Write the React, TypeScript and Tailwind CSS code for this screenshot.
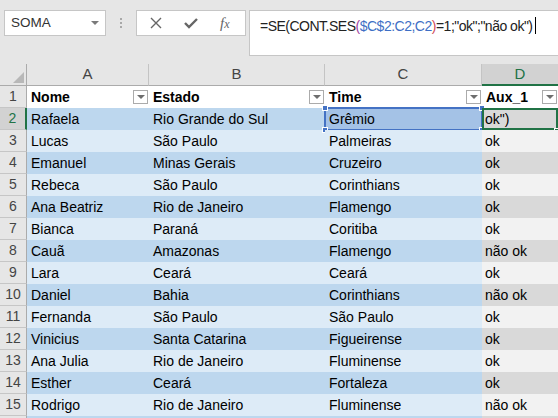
const rows = [
  ['Rafaela', 'Rio Grande do Sul', 'Grêmio', 'ok")'],
  ['Lucas', 'São Paulo', 'Palmeiras', 'ok'],
  ['Emanuel', 'Minas Gerais', 'Cruzeiro', 'ok'],
  ['Rebeca', 'São Paulo', 'Corinthians', 'ok'],
  ['Ana Beatriz', 'Rio de Janeiro', 'Flamengo', 'ok'],
  ['Bianca', 'Paraná', 'Coritiba', 'ok'],
  ['Cauã', 'Amazonas', 'Flamengo', 'não ok'],
  ['Lara', 'Ceará', 'Ceará', 'ok'],
  ['Daniel', 'Bahia', 'Corinthians', 'não ok'],
  ['Fernanda', 'São Paulo', 'São Paulo', 'ok'],
  ['Vinicius', 'Santa Catarina', 'Figueirense', 'ok'],
  ['Ana Julia', 'Rio de Janeiro', 'Fluminense', 'ok'],
  ['Esther', 'Ceará', 'Fortaleza', 'ok'],
  ['Rodrigo', 'Rio de Janeiro', 'Fluminense', 'não ok'],
  ['', '', '', ''],
];

const font = { fontFamily: '"Liberation Sans", Arial, sans-serif' };

function FilterButton() {
  return (
    <span className="ml-auto mr-[1px] flex h-[14px] w-[15px] items-center justify-center border border-[#ababab] bg-white">
      <span className="h-0 w-0 border-x-[4px] border-t-[4px] border-x-transparent border-t-[#6e6e6e]" />
    </span>
  );
}

function Corner({ pos }: { pos: string }) {
  return <span className={`absolute h-[6px] w-[6px] border border-white bg-[#4472c4] ${pos}`} />;
}

function FormulaBar() {
  return (
    <div className="flex h-[64px] items-start bg-[#e6e6e6] pt-[10px]">
      <div className="ml-[4px] flex h-[26px] w-[102px] items-center border border-[#c6c6c6] bg-white pl-[6px] pr-[6px] text-[13.5px] text-[#333]">
        <span>SOMA</span>
        <span className="ml-auto h-0 w-0 border-x-[4px] border-t-[4px] border-x-transparent border-t-[#7a7a7a]" />
      </div>
      <div className="flex h-[26px] w-[30px] flex-col items-center justify-center gap-[2px]">
        <span className="h-[2px] w-[2px] bg-[#a8a8a8]" />
        <span className="h-[2px] w-[2px] bg-[#a8a8a8]" />
        <span className="h-[2px] w-[2px] bg-[#a8a8a8]" />
      </div>
      <div className="flex h-[26px] w-[110px] items-center border border-[#c6c6c6] bg-white">
        <svg width="12" height="12" viewBox="0 0 12 12" className="ml-[13px]">
          <path d="M1 1 L11 11 M11 1 L1 11" stroke="#666" strokeWidth="1.4" />
        </svg>
        <svg width="14" height="12" viewBox="0 0 14 12" className="ml-[22px]">
          <path d="M1 6 L5 10 L13 2" stroke="#666" strokeWidth="2.4" fill="none" />
        </svg>
        <span
          className="ml-[22px] text-[15px] italic text-[#666]"
          style={{ fontFamily: '"Liberation Serif", "Times New Roman", serif' }}
        >
          f<span className="text-[12px]">x</span>
        </span>
      </div>
      <div className="ml-[3px] h-[46px] flex-1 border-y border-l border-[#c6c6c6] bg-white pl-[10px] pt-[3px] text-[14px] tracking-[-0.5px] text-[#222]">
        =SE(CONT.SES<span className="text-[#a03fa0]">(</span>
        <span className="text-[#3e6fc5]">$C$2:C2;C2</span>
        <span className="text-[#d24a5a]">)</span>=1;"ok";"não ok")
        <span className="ml-[2px] inline-block h-[17px] w-[1px] translate-y-[3px] bg-black" />
      </div>
    </div>
  );
}

export default function App() {
  return (
    <div className="h-[418px] w-[558px] overflow-hidden bg-white" style={font}>
      <FormulaBar />
      <div className="grid grid-cols-[27px_122px_176px_157px_76px]">
        {/* column headers */}
        <div className="relative h-[22px] border-r border-b border-[#ababab] bg-[#e6e6e6]">
          <span className="absolute right-[2px] bottom-[2px] h-0 w-0 border-b-[11px] border-l-[11px] border-b-[#b8b8b8] border-l-transparent" />
        </div>
        {['A', 'B', 'C'].map((c) => (
          <div
            key={c}
            className="flex h-[22px] items-center justify-center border-r border-b border-[#c4c4c4] border-b-[#ababab] bg-[#e6e6e6] text-[15px] text-[#444]"
          >
            {c}
          </div>
        ))}
        <div className="flex h-[22px] items-center justify-center border-b-2 border-[#217346] bg-[#d2d2d2] text-[15px] text-[#217346]">
          D
        </div>

        {/* row 1 */}
        <div className="flex h-[22px] items-center justify-center border-r border-b border-[#ababab] border-b-[#c6c6c6] bg-[#e6e6e6] text-[14px] text-[#444]">
          1
        </div>
        {['Nome', 'Estado', 'Time', 'Aux_1'].map((h) => (
          <div key={h} className="flex h-[22px] items-center bg-white pl-[4px] text-[14px] font-bold text-black">
            <span>{h}</span>
            <FilterButton />
          </div>
        ))}

        {rows.map((r, i) => {
          const n = i + 2;
          const dark = n % 2 === 0;
          const band = dark ? 'bg-[#bdd7ee]' : 'bg-[#ddebf7]';
          const gray = dark ? 'bg-[#d9d9d9]' : 'bg-[#f2f2f2]';
          const active = n === 2;
          return (
            <div key={n} className="contents">
              <div
                className={`flex h-[22px] items-center justify-center border-b border-[#c6c6c6] text-[14px] ${
                  active
                    ? 'border-r-2 border-r-[#217346] bg-[#d2d2d2] text-[#217346]'
                    : 'border-r border-r-[#ababab] bg-[#e6e6e6] text-[#444]'
                }`}
              >
                {n < 16 ? n : ''}
              </div>
              <div className={`flex h-[22px] items-center pl-[4px] text-[14px] text-black ${band}`}>{r[0]}</div>
              <div className={`flex h-[22px] items-center pl-[4px] text-[14px] text-black ${band}`}>{r[1]}</div>
              <div
                className={`relative flex h-[22px] items-center pl-[4px] text-[14px] text-black ${
                  active ? 'bg-[#a4c2e6]' : band
                }`}
              >
                {r[2]}
                {active && (
                  <>
                    <span className="absolute -top-[1px] -left-[1px] -right-[1px] -bottom-[1px] border-2 border-[#4472c4]" />
                    <Corner pos="-top-[3px] -left-[3px]" />
                    <Corner pos="-top-[3px] -right-[3px]" />
                    <Corner pos="-bottom-[3px] -left-[3px]" />
                    <Corner pos="-bottom-[3px] -right-[3px]" />
                  </>
                )}
              </div>
              <div className={`relative flex h-[22px] items-center pl-[3px] text-[14px] text-black ${gray}`}>
                {r[3]}
                {active && (
                  <>
                    <span className="absolute inset-0 border-2 border-[#217346]" />
                    <span className="absolute -right-[1px] -bottom-[3px] h-[5px] w-[5px] border border-white bg-[#217346]" />
                  </>
                )}
              </div>
            </div>
          );
        })}
      </div>
    </div>
  );
}
